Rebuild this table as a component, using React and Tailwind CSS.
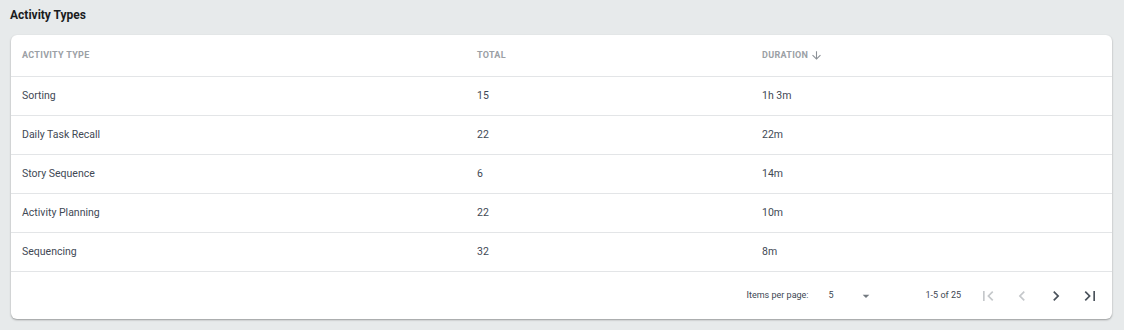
import React from 'react';

const rows = [
  { type: 'Sorting', total: 15, duration: '1h 3m' },
  { type: 'Daily Task Recall', total: 22, duration: '22m' },
  { type: 'Story Sequence', total: 6, duration: '14m' },
  { type: 'Activity Planning', total: 22, duration: '10m' },
  { type: 'Sequencing', total: 32, duration: '8m' },
];

const Icon = ({ d, className }) => (
  <svg viewBox="0 0 24 24" className={className} fill="currentColor">
    <path d={d} />
  </svg>
);

const paths = {
  first: 'M18.41 16.59L13.82 12l4.59-4.59L17 6l-6 6 6 6zM6 6h2v12H6z',
  prev: 'M15.41 7.41L14 6l-6 6 6 6 1.41-1.41L10.83 12z',
  next: 'M10 6L8.59 7.41 13.17 12l-4.58 4.59L10 18l6-6z',
  last: 'M5.59 7.41L10.18 12l-4.59 4.59L7 18l6-6-6-6zM16 6h2v12h-2z',
  down: 'M20 12l-1.41-1.41L13 16.17V4h-2v12.17l-5.58-5.59L4 12l8 8 8-8z',
  drop: 'M7 10l5 5 5-5z',
};

const App = () => {
  return (
    <div className="min-h-[330px] bg-[#e7eaeb] px-[11px] pt-[6px] font-['Roboto',sans-serif]">
      <h2 className="-ml-[1px] text-[12px] font-bold leading-[18px] text-[#1a1c1e]">Activity Types</h2>
      <div className="mt-[11px] w-[1101px] rounded-[6px] bg-white shadow-[0_1px_2px_rgba(0,0,0,0.35)]">
        <div className="grid h-[42px] grid-cols-[455px_285px_1fr] items-center border-b border-[#e3e5e7] pl-[11px] text-[9px] font-bold uppercase tracking-[0.3px] text-[#9ba0a5]">
          <div>Activity Type</div>
          <div>Total</div>
          <div className="flex items-center gap-[2px]">
            Duration
            <Icon d={paths.down} className="-mt-[1px] h-[13px] w-[13px] text-[#8b9096]" />
          </div>
        </div>
        {rows.map((r) => (
          <div
            key={r.type}
            className="grid h-[39px] grid-cols-[455px_285px_1fr] items-center border-b border-[#e3e5e7] pl-[11px] text-[10.5px] text-[#3f4955]"
          >
            <div>{r.type}</div>
            <div>{r.total}</div>
            <div>{r.duration}</div>
          </div>
        ))}
        <div className="flex h-[47px] items-center justify-end pr-[12px] text-[9px] text-[#3d4753]">
          <span>Items per page:</span>
          <div className="ml-[20px] flex w-[45px] items-center justify-between">
            <span>5</span>
            <Icon d={paths.drop} className="h-[16px] w-[16px] text-[#737a80]" />
          </div>
          <span className="ml-[52px]">1-5 of 25</span>
          <div className="ml-[17px] flex items-center gap-[14px]">
            <Icon d={paths.first} className="h-[20px] w-[20px] text-[#c5c8cb]" />
            <Icon d={paths.prev} className="h-[20px] w-[20px] text-[#c5c8cb]" />
            <Icon d={paths.next} className="h-[20px] w-[20px] text-[#4a525b]" />
            <Icon d={paths.last} className="h-[20px] w-[20px] text-[#4a525b]" />
          </div>
        </div>
      </div>
    </div>
  );
};

export default App;
